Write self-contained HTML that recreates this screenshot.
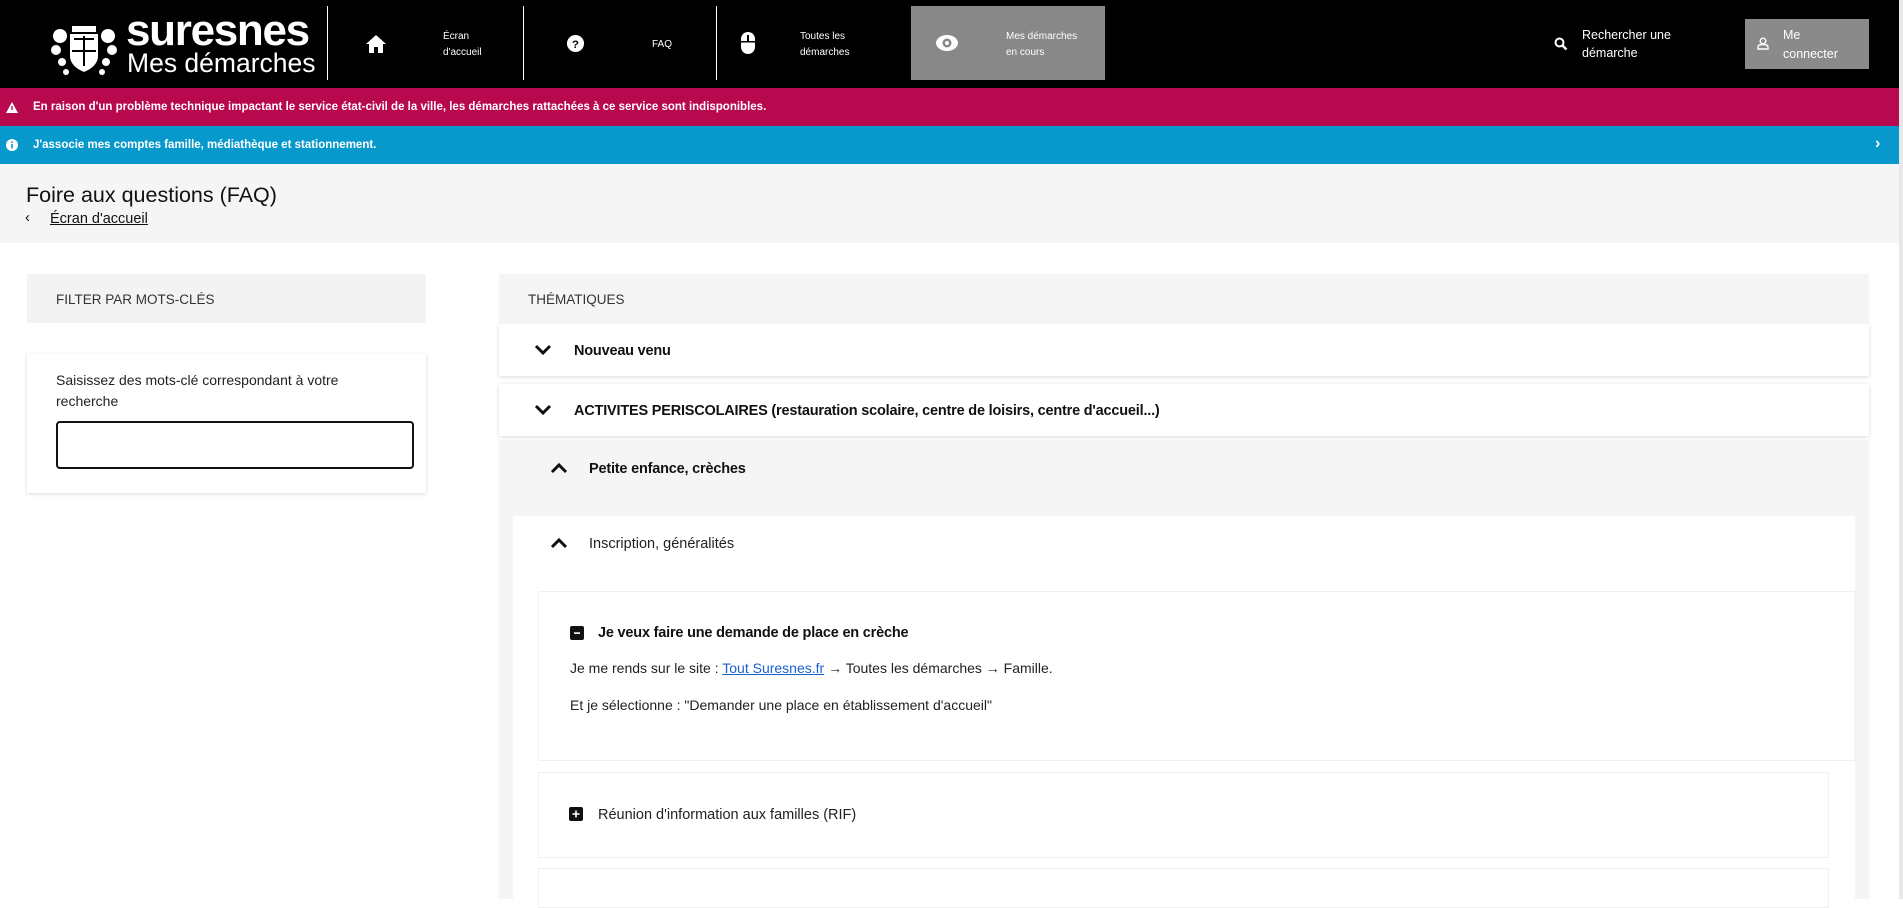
<!DOCTYPE html>
<html><head><meta charset="utf-8">
<style>
*{box-sizing:border-box;margin:0;padding:0}
html,body{width:1903px;height:899px;overflow:hidden;background:#fff;font-family:"Liberation Sans",Arial,sans-serif;color:#111}
.abs{position:absolute}
#hdr{position:absolute;left:0;top:0;width:1899px;height:88px;background:#000;color:#fff}
.div{position:absolute;top:6px;width:1px;height:74px;background:#fff}
.nt{position:absolute;font-size:10px;line-height:16px;color:#fff}
#red{position:absolute;left:0;top:88px;width:1899px;height:38px;background:#b8094f;color:#fff;font-size:11.5px;font-weight:bold}
#blue{position:absolute;left:0;top:126px;width:1899px;height:38px;background:#0899cc;color:#fff;font-size:11.5px;font-weight:bold}
#sb{position:absolute;left:1899px;top:0;width:4px;height:899px;background:#e8e8e8}
#ph{position:absolute;left:0;top:164px;width:1899px;height:79px;background:#f5f5f5}
.card{position:absolute;background:#fff;box-shadow:0 1px 4px rgba(0,0,0,.15)}
.row{font-weight:bold;font-size:14.5px;letter-spacing:-.2px}
</style></head><body>
<div id="hdr">
  <svg class="abs" style="left:50px;top:22px" width="68" height="56" viewBox="0 0 68 56">
    <g fill="#fff">
      <rect x="22" y="4" width="24" height="6"/>
      <path d="M20 12h28v22c0 8-7 13-14 16c-7-3-14-8-14-16z"/>
      <circle cx="10" cy="14" r="7"/><circle cx="58" cy="14" r="7"/>
      <circle cx="6" cy="28" r="5"/><circle cx="62" cy="28" r="5"/>
      <circle cx="12" cy="40" r="4"/><circle cx="56" cy="40" r="4"/>
      <circle cx="16" cy="50" r="3"/><circle cx="52" cy="50" r="3"/>
    </g>
    <g fill="#000"><rect x="24" y="16" width="20" height="2"/><rect x="33" y="14" width="2" height="30"/><rect x="22" y="28" width="24" height="2"/></g>
  </svg>
  <div class="abs" style="left:126px;top:9px;font-size:44px;font-weight:bold;letter-spacing:-1.3px;line-height:44px">suresnes</div>
  <div class="abs" style="left:127px;top:48px;font-size:26.5px;line-height:30px">Mes démarches</div>
  <div class="div" style="left:327px"></div>
  <svg class="abs" style="left:365px;top:34px" width="22" height="20" viewBox="0 0 22 20"><path fill="#fff" d="M11 1L1 10h3v9h5v-6h4v6h5v-9h3z"/></svg>
  <div class="nt" style="left:443px;top:29px">Écran<br>d'accueil</div>
  <div class="div" style="left:523px"></div>
  <svg class="abs" style="left:566px;top:34px" width="19" height="19" viewBox="0 0 20 20"><circle cx="10" cy="10" r="9" fill="#fff"/><text x="10" y="14.5" font-size="12" font-weight="bold" text-anchor="middle" fill="#000" font-family="Liberation Sans">?</text></svg>
  <div class="nt" style="left:652px;top:37px">FAQ</div>
  <div class="div" style="left:716px"></div>
  <svg class="abs" style="left:740px;top:31px" width="16" height="24" viewBox="0 0 16 24"><rect x="1" y="1" width="14" height="22" rx="7" fill="#fff"/><rect x="7" y="4" width="2" height="7" fill="#000"/><rect x="1" y="10" width="14" height="1.5" fill="#000"/></svg>
  <div class="nt" style="left:800px;top:29px">Toutes les<br>démarches</div>
  <div class="abs" style="left:911px;top:6px;width:194px;height:74px;background:#888"></div>
  <svg class="abs" style="left:935px;top:33px" width="24" height="20" viewBox="0 0 24 20"><ellipse cx="12" cy="10" rx="11" ry="8" fill="#fff"/><circle cx="12" cy="10" r="4.5" fill="#888"/><circle cx="12" cy="10" r="2" fill="#fff"/></svg>
  <div class="nt" style="left:1006px;top:29px">Mes démarches<br>en cours</div>
  <svg class="abs" style="left:1554px;top:37px" width="14" height="14" viewBox="0 0 14 14"><circle cx="5.5" cy="5.5" r="4" stroke="#fff" stroke-width="2" fill="none"/><path d="M8.5 8.5L12.5 12.5" stroke="#fff" stroke-width="2.4"/></svg>
  <div class="nt" style="left:1582px;top:26px;font-size:12.5px;line-height:18px">Rechercher une<br>démarche</div>
  <div class="abs" style="left:1745px;top:19px;width:124px;height:50px;background:#8a8a8a"></div>
  <svg class="abs" style="left:1757px;top:37px" width="12" height="13" viewBox="0 0 12 13"><circle cx="6" cy="4" r="2.8" stroke="#fff" stroke-width="1.4" fill="none"/><path d="M1 12v-2c0-1.5 1.5-2.5 5-2.5s5 1 5 2.5v2z" stroke="#fff" stroke-width="1.4" fill="none"/></svg>
  <div class="nt" style="left:1783px;top:26px;font-size:12.5px;line-height:19px">Me<br>connecter</div>
</div>
<div id="red">
  <svg class="abs" style="left:6px;top:14px" width="12" height="11" viewBox="0 0 12 11"><path d="M6 0L12 11H0z" fill="#fff"/><rect x="5.3" y="4" width="1.4" height="4" fill="#b8094f"/></svg>
  <div class="abs" style="left:33px;top:13px">En raison d'un problème technique impactant le service état-civil de la ville, les démarches rattachées à ce service sont indisponibles.</div>
</div>
<div id="blue">
  <svg class="abs" style="left:6px;top:13px" width="12" height="12" viewBox="0 0 12 12"><circle cx="6" cy="6" r="6" fill="#fff"/><rect x="5.2" y="5" width="1.6" height="4.5" fill="#0899cc"/><circle cx="6" cy="3.2" r=".9" fill="#0899cc"/></svg>
  <div class="abs" style="left:33px;top:13px">J'associe mes comptes famille, médiathèque et stationnement.</div>
  <div class="abs" style="left:1875px;top:9px;font-size:16px">›</div>
</div>
<div id="sb"></div>
<div id="ph">
  <div class="abs" style="left:26px;top:19px;font-size:21.5px;color:#111">Foire aux questions (FAQ)</div>
  <div class="abs" style="left:25px;top:45px;font-size:15px">‹</div>
  <div class="abs" style="left:50px;top:47px;font-size:14.5px;text-decoration:underline">Écran d'accueil</div>
</div>
<!-- left -->
<div class="abs" style="left:27px;top:274px;width:399px;height:49px;background:#f3f3f3"></div>
<div class="abs" style="left:56px;top:292px;font-size:13.5px;color:#333">FILTER PAR MOTS-CLÉS</div>
<div class="card" style="left:27px;top:354px;width:399px;height:139px"></div>
<div class="abs" style="left:56px;top:370px;font-size:14px;line-height:21px;width:340px;color:#222">Saisissez des mots-clé correspondant à votre recherche</div>
<div class="abs" style="left:56px;top:421px;width:358px;height:48px;border:2px solid #111;border-radius:4px;background:#fff"></div>
<!-- right -->
<div class="abs" style="left:499px;top:274px;width:1370px;height:49px;background:#f5f5f5"></div>
<div class="abs" style="left:528px;top:292px;font-size:13.5px;color:#333">THÉMATIQUES</div>
<div class="card" style="left:499px;top:324px;width:1370px;height:52px"></div>
<svg class="abs" style="left:534px;top:344px" width="18" height="12" viewBox="0 0 18 12"><path d="M2 2l7 7l7-7" stroke="#111" stroke-width="3" fill="none"/></svg>
<div class="abs row" style="left:574px;top:343px">Nouveau venu</div>
<div class="card" style="left:499px;top:384px;width:1370px;height:52px"></div>
<svg class="abs" style="left:534px;top:404px" width="18" height="12" viewBox="0 0 18 12"><path d="M2 2l7 7l7-7" stroke="#111" stroke-width="3" fill="none"/></svg>
<div class="abs row" style="left:574px;top:403px">ACTIVITES PERISCOLAIRES (restauration scolaire, centre de loisirs, centre d'accueil...)</div>
<div class="abs" style="left:499px;top:440px;width:1370px;height:459px;background:#f5f5f5"></div>
<svg class="abs" style="left:550px;top:462px" width="18" height="12" viewBox="0 0 18 12"><path d="M2 10l7-7l7 7" stroke="#111" stroke-width="3" fill="none"/></svg>
<div class="abs row" style="left:589px;top:461px">Petite enfance, crèches</div>
<div class="abs" style="left:513px;top:516px;width:1342px;height:383px;background:#fff"></div>
<svg class="abs" style="left:550px;top:537px" width="18" height="12" viewBox="0 0 18 12"><path d="M2 10l7-7l7 7" stroke="#111" stroke-width="3" fill="none"/></svg>
<div class="abs" style="left:589px;top:536px;font-size:14.5px;color:#222">Inscription, généralités</div>
<div class="abs" style="left:538px;top:591px;width:1317px;height:170px;border:1px solid #f0f0f0;background:#fff"></div>
<svg class="abs" style="left:570px;top:626px" width="14" height="14" viewBox="0 0 14 14"><rect width="14" height="14" rx="2" fill="#111"/><rect x="4" y="6.3" width="6" height="1.6" fill="#fff"/></svg>
<div class="abs row" style="left:598px;top:625px">Je veux faire une demande de place en crèche</div>
<div class="abs" style="left:570px;top:660px;font-size:14px;color:#222">Je me rends sur le site : <span style="color:#1a5fd0;text-decoration:underline">Tout Suresnes.fr</span> → Toutes les démarches → Famille.</div>
<div class="abs" style="left:570px;top:697px;font-size:14px;color:#222">Et je sélectionne : "Demander une place en établissement d'accueil"</div>
<div class="abs" style="left:538px;top:772px;width:1291px;height:86px;border:1px solid #f0f0f0;background:#fff"></div>
<svg class="abs" style="left:569px;top:807px" width="14" height="14" viewBox="0 0 14 14"><rect width="14" height="14" rx="2" fill="#111"/><rect x="3.5" y="6.2" width="7" height="1.6" fill="#fff"/><rect x="6.2" y="3.5" width="1.6" height="7" fill="#fff"/></svg>
<div class="abs" style="left:598px;top:807px;font-size:14.5px;color:#222">Réunion d'information aux familles (RIF)</div>
<div class="abs" style="left:538px;top:868px;width:1291px;height:40px;border:1px solid #f0f0f0;background:#fff"></div>
</body></html>
